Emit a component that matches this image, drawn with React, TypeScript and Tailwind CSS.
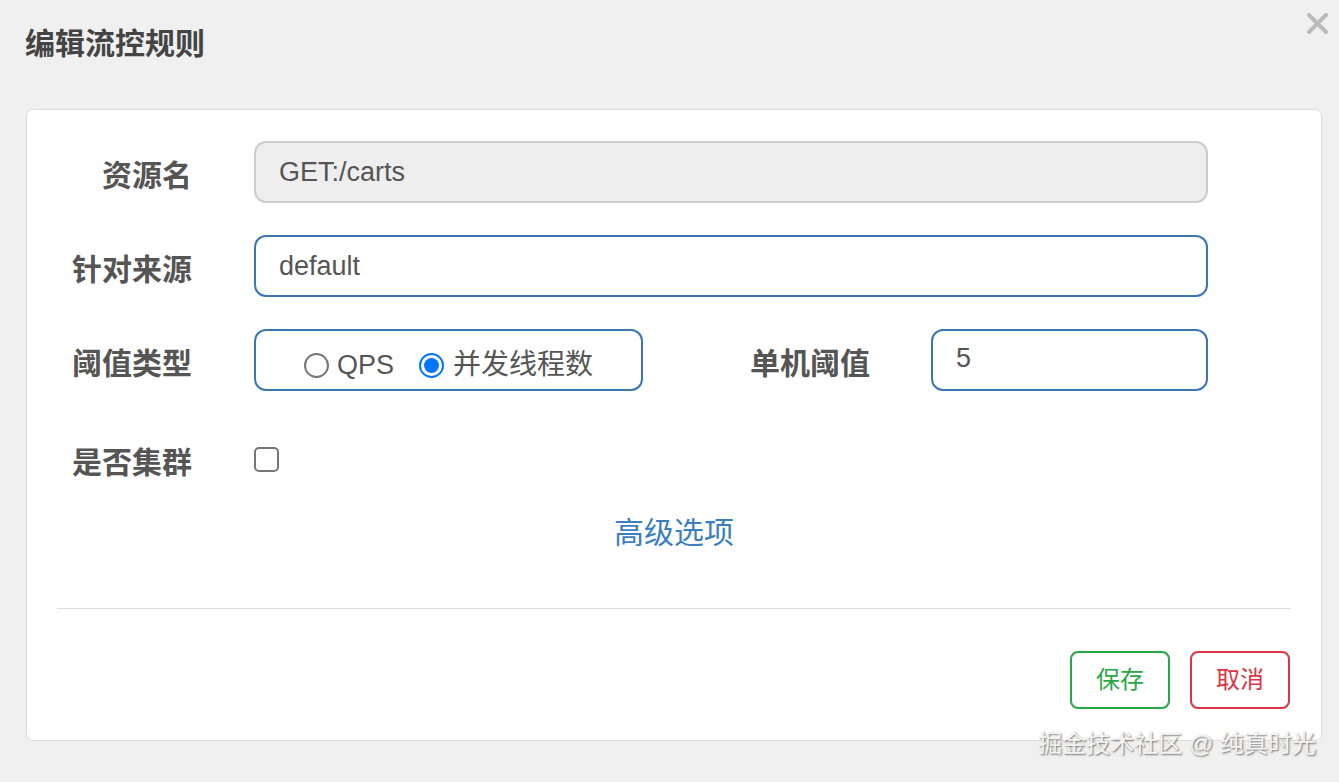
import { useState } from "react";

const cjk = "font-['Liberation_Sans','Noto_Sans_CJK_SC',sans-serif]";

function Label({ children, width }: { children: string; width: string }) {
  return (
    <div className={`${width} shrink-0 pt-[6px] text-right text-[30px] font-bold leading-[45px] text-[#555]`}>
      {children}
    </div>
  );
}

function Radio({ checked }: { checked: boolean }) {
  return checked ? (
    <span className="flex h-[25px] w-[25px] items-center justify-center rounded-full border-2 border-[#0075ff] bg-white">
      <span className="h-[15px] w-[15px] rounded-full bg-[#0075ff]" />
    </span>
  ) : (
    <span className="h-[25px] w-[25px] rounded-full border-2 border-[#767676] bg-white" />
  );
}

export default function App() {
  const [grade, setGrade] = useState<"qps" | "thread">("thread");
  const [cluster, setCluster] = useState(false);

  return (
    <div className={`relative min-h-screen bg-[#f0f0f0] pb-[41px] ${cjk}`}>
      {/* dialog header */}
      <div className="flex items-start justify-between pl-[25px] pr-[11px] pt-[21px]">
        <h3 className="text-[30px] font-bold leading-[45px] text-[#444]">编辑流控规则</h3>
        <button className="mt-[-8px] p-0 text-[#bbb]" aria-label="close">
          <svg width="21" height="21" viewBox="0 0 21 21">
            <path d="M2 2 L19 19 M19 2 L2 19" stroke="currentColor" strokeWidth="4" strokeLinecap="round" />
          </svg>
        </button>
      </div>

      {/* form card */}
      <div className="ml-[26px] mr-[17px] mt-[43px] rounded-[7px] border border-[#ddd] bg-white">
        <div className="flex flex-col pt-[31px]">
          <div className="flex h-[62px] items-center">
            <Label width="w-[165px]">资源名</Label>
            <div className="ml-[62px] flex h-[62px] w-[954px] items-center rounded-[12px] border-2 border-[#ccc] bg-[#eee] pl-[23px] text-[27px] text-[#555]">
              GET:/carts
            </div>
          </div>

          <div className="mt-[32px] flex h-[62px] items-center">
            <Label width="w-[165px]">针对来源</Label>
            <div className="ml-[62px] flex h-[62px] w-[954px] items-center rounded-[12px] border-2 border-[#3b77b2] bg-white pl-[23px] text-[27px] text-[#555]">
              default
            </div>
          </div>

          <div className="mt-[32px] flex h-[62px] items-center">
            <Label width="w-[165px]">阈值类型</Label>
            <div className="ml-[62px] flex h-[62px] w-[389px] items-center justify-center gap-[25px] rounded-[12px] border-2 border-[#3b77b2] bg-white pt-[10px] text-[27px] text-[#555]">
              <label className="flex items-center gap-[8px]" onClick={() => setGrade("qps")}>
                <Radio checked={grade === "qps"} />
                <span>QPS</span>
              </label>
              <label className="flex items-center gap-[9px]" onClick={() => setGrade("thread")}>
                <Radio checked={grade === "thread"} />
                <span className="text-[28px]">并发线程数</span>
              </label>
            </div>
            <Label width="w-[227px]">单机阈值</Label>
            <div className="ml-[61px] flex h-[62px] w-[277px] items-center rounded-[12px] border-2 border-[#3b77b2] bg-white pb-[4px] pl-[23px] text-[27px] text-[#555]">
              5
            </div>
          </div>

          <div className="mt-[37px] flex h-[62px] items-center">
            <Label width="w-[165px]">是否集群</Label>
            <button
              onClick={() => setCluster(!cluster)}
              className="ml-[62px] h-[25px] w-[25px] rounded-[5px] border-2 border-[#767676] bg-white"
            />
          </div>

          <div className="mt-[20px] text-center text-[30px] leading-[45px] text-[#3c7fbf]">高级选项</div>
        </div>

        <div className="mx-[30px] mt-[53px] h-px bg-[#ddd]" />

        <div className="flex justify-end gap-[20px] px-[31px] pb-[31px] pt-[42px]">
          <button className="h-[58px] w-[100px] rounded-[8px] border-2 border-[#28a745] bg-white text-[24px] text-[#28a745]">
            保存
          </button>
          <button className="h-[58px] w-[100px] rounded-[8px] border-2 border-[#dc3545] bg-white text-[24px] text-[#dc3545]">
            取消
          </button>
        </div>
      </div>

      <div className="absolute right-[23px] top-[729px] text-[24px] leading-[30px] text-[#f4f4f4] [text-shadow:1px_1px_2px_rgba(0,0,0,0.55)]">
        掘金技术社区 @ 纯真时光
      </div>
    </div>
  );
}
